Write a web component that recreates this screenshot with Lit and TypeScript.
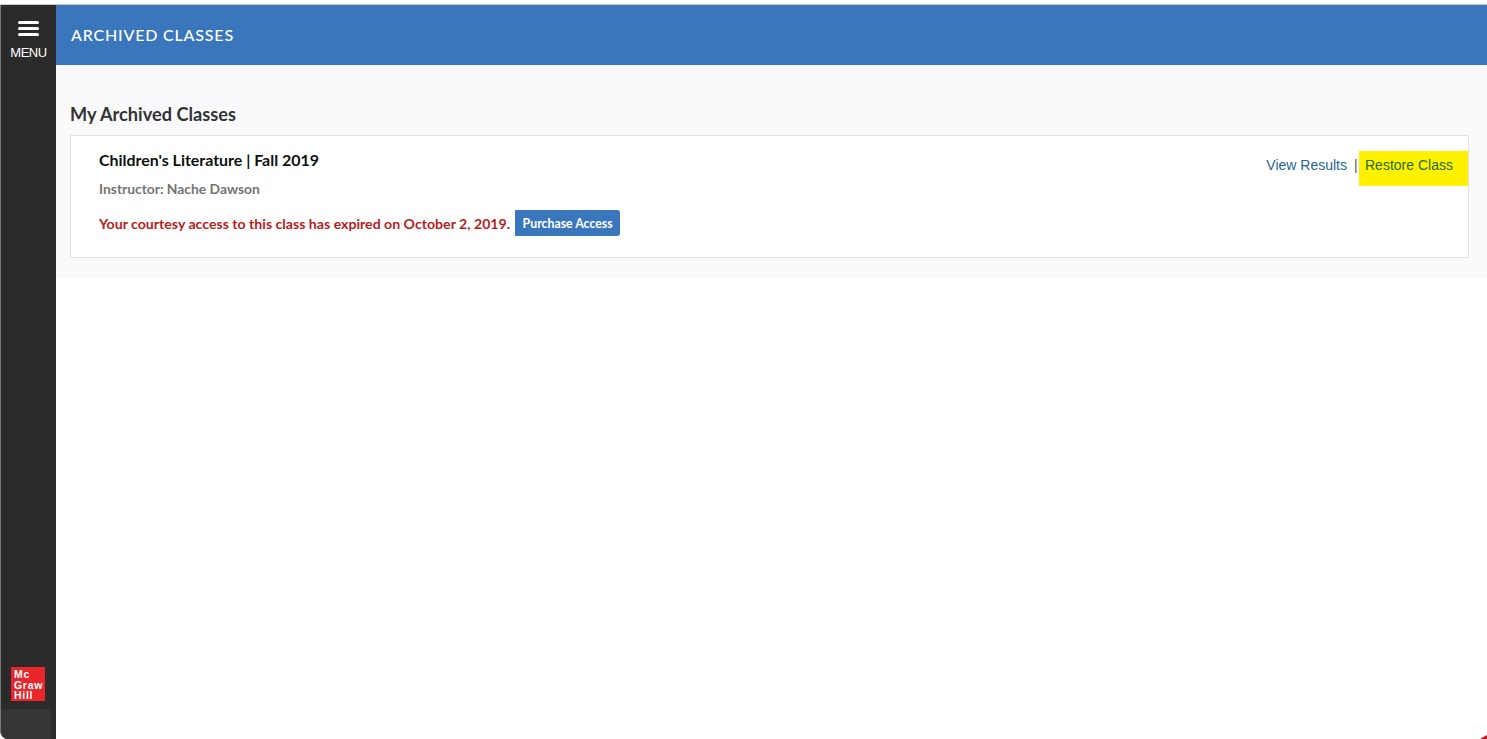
import { LitElement, html, css } from "lit";
import { customElement } from "lit/decorators.js";

@customElement("app-root")
export class AppRoot extends LitElement {
  static styles = css`
    :host { display: block; height: 739px; overflow: hidden; background: #fff; font-family: "Lato", "Liberation Sans", sans-serif; position: relative; }
    .top { height: 4px; background: #fff; border-bottom: 1px solid #c9c9c9; }
    .shell { display: flex; height: 734px; }
    .side { background: #2b2b2b; border-left: 1px solid #777; box-sizing: border-box; width: 56px; display: flex; flex-direction: column; align-items: center; border-bottom-left-radius: 8px; overflow: hidden; }
    .burger { margin-top: 16px; width: 21px; display: flex; flex-direction: column; gap: 3px; }
    .burger i { display: block; height: 3px; background: #fff; border-radius: 1.5px; }
    .menu { margin-top: 9px; color: #fff; font: 13px/16px "Liberation Sans", sans-serif; letter-spacing: -0.45px; }
    .spacer { flex: 1; }
    .logo { width: 34px; height: 34px; background: #e8262a; color: #fff; font: 700 10.5px/10.5px "Liberation Sans", sans-serif; box-sizing: border-box; padding: 2px 0 0 3px; margin: 0 1px 8px 0; letter-spacing: 0.7px; }
    .foot { width: 50px; height: 30px; background: #353535; align-self: flex-start; }
    .main { flex: 1; min-width: 0; }
    .head { height: 60px; box-sizing: border-box; padding: 0 0 2px 15px; background: #3a76bb; color: #fff; display: flex; align-items: center; font-size: 16px; font-weight: 500; letter-spacing: 0.82px; }
    .content { background: #fafafc; height: 213px; box-sizing: border-box; padding: 38px 18px 0 14px; }
    h2 { margin: 0 0 10px; font-size: 18.2px; line-height: 22px; font-weight: 700; color: #333; }
    .card { height: 123px; box-sizing: border-box; background: #fff; border: 1px solid #e3e3e5; padding: 14px 0 0 28px; display: flex; justify-content: space-between; }
    .title { font-size: 15.95px; line-height: 20px; font-weight: 700; color: #111; }
    .inst { margin-top: 10px; font-size: 13.85px; line-height: 18px; font-weight: 700; color: #757575; }
    .exp { margin-top: 12px; display: flex; align-items: center; font-size: 14.13px; font-weight: 700; color: #b71c1c; }
    .btn { margin-left: 5px; height: 26px; width: 105px; background: #3a76bb; color: #fff; border-radius: 1px 3px 3px 1px; font-size: 12.3px; font-weight: 700; display: flex; align-items: center; justify-content: center; }
    .acts { display: flex; align-items: flex-start; margin-top: 1px; font: 14px/18px "Liberation Sans", sans-serif; color: #2a6496; }
    .view { margin-top: 5px; }
    .sep { margin: 5px 0 0 7px; color: #555; width: 5px; }
    .restore { background: #fff200; color: #2c6a10; width: 109px; height: 35px; box-sizing: border-box; padding: 5px 0 0 6px; }
    .corner { position: absolute; right: 0; bottom: 0; width: 7px; height: 4px; background: #c0191c; clip-path: polygon(100% 0, 100% 100%, 0 100%); }
  `;
  render() {
    return html`
      <div class="top"></div>
      <div class="shell">
        <nav class="side">
          <div class="burger"><i></i><i></i><i></i></div>
          <div class="menu">MENU</div>
          <div class="spacer"></div>
          <div class="logo">Mc<br />Graw<br />Hill</div>
          <div class="foot"></div>
        </nav>
        <div class="main">
          <header class="head">ARCHIVED CLASSES</header>
          <section class="content">
            <h2>My Archived Classes</h2>
            <div class="card">
              <div>
                <div class="title">Children's Literature | Fall 2019</div>
                <div class="inst">Instructor: Nache Dawson</div>
                <div class="exp">Your courtesy access to this class has expired on October 2, 2019.<span class="btn">Purchase Access</span></div>
              </div>
              <div class="acts">
                <span class="view">View Results</span><span class="sep">|</span><span class="restore">Restore Class</span>
              </div>
            </div>
          </section>
        </div>
      </div>
      <div class="corner"></div>
    `;
  }
}
